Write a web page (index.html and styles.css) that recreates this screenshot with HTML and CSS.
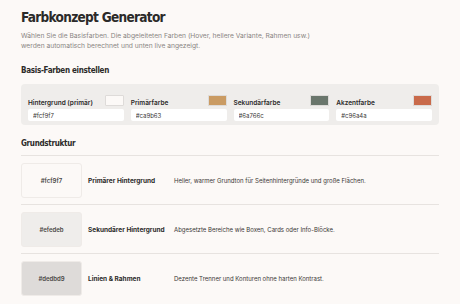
FILE: index.html
```html
<!DOCTYPE HTML>
<html>
	<head>
		<meta name="viewport" content="width=device-width, initial-scale=1">
		<link rel="stylesheet" href="styles.css">
	</head>
	<body>
		<h1 class="title">Farbkonzept Generator</h1>
		<p class="intro">Wählen Sie die Basisfarben. Die abgeleiteten Farben (Hover, hellere Variante, Rahmen usw.) werden automatisch berechnet und unten live angezeigt.</p>

		<h2 class="section-title">Basis-Farben einstellen</h2>
		<div class="base-panel">
			<div class="base-field">
				<div class="base-field-head">
					<span class="base-label">Hintergrund (primär)</span>
					<span class="base-swatch" style="background-color: #fcf9f7;"></span>
				</div>
				<input class="base-input" value="#fcf9f7">
			</div>
			<div class="base-field">
				<div class="base-field-head">
					<span class="base-label">Primärfarbe</span>
					<span class="base-swatch" style="background-color: #ca9b63;"></span>
				</div>
				<input class="base-input" value="#ca9b63">
			</div>
			<div class="base-field">
				<div class="base-field-head">
					<span class="base-label">Sekundärfarbe</span>
					<span class="base-swatch" style="background-color: #6a766c;"></span>
				</div>
				<input class="base-input" value="#6a766c">
			</div>
			<div class="base-field">
				<div class="base-field-head">
					<span class="base-label">Akzentfarbe</span>
					<span class="base-swatch" style="background-color: #c96a4a;"></span>
				</div>
				<input class="base-input" value="#c96a4a">
			</div>
		</div>

		<h2 class="section-title structure-title">Grundstruktur</h2>
		<div class="structure-list">
			<div class="structure-row">
				<div class="structure-swatch" style="background-color: #fcf9f7;">#fcf9f7</div>
				<div class="structure-name">Primärer Hintergrund</div>
				<div class="structure-desc">Heller, warmer Grundton für Seitenhintergründe und große Flächen.</div>
			</div>
			<div class="structure-row">
				<div class="structure-swatch" style="background-color: #efedeb;">#efedeb</div>
				<div class="structure-name">Sekundärer Hintergrund</div>
				<div class="structure-desc">Abgesetzte Bereiche wie Boxen, Cards oder Info-Blöcke.</div>
			</div>
			<div class="structure-row">
				<div class="structure-swatch" style="background-color: #dedbd9;">#dedbd9</div>
				<div class="structure-name">Linien &amp; Rahmen</div>
				<div class="structure-desc">Dezente Trenner und Konturen ohne harten Kontrast.</div>
			</div>
		</div>
	</body>
</html>
```
FILE: styles.css
```css
html{
	font-family: 'Inter', sans-serif;
	color: #2b2a29;
	background-color: #fcf9f7;
}
body{
	margin: 0;
	padding: 10px 21px 0 21px;
}
.title{
	font-family: 'DejaVu Sans Condensed', 'DejaVu Sans', sans-serif;
	font-stretch: condensed;
	font-size: 13.5px;
	font-weight: 700;
	letter-spacing: -0.7px;
	line-height: 15px;
	margin: 0;
}
.intro{
	font-size: 6.7px;
	line-height: 10px;
	color: #8a8683;
	max-width: 305px;
	margin: 6px 0 0 0;
}
.section-title{
	font-family: 'DejaVu Sans Condensed', 'DejaVu Sans', sans-serif;
	font-stretch: condensed;
	font-size: 8px;
	font-weight: 700;
	letter-spacing: -0.3px;
	line-height: 12px;
	margin: 14px 0 7px 0;
}
.base-panel{
	display: grid;
	grid-template-columns: repeat(4, 1fr);
	gap: 7px;
	padding: 9px 7px 4px 7px;
	background-color: #efedeb;
	border-radius: 4px;
}
.base-field-head{
	display: flex;
	justify-content: space-between;
	align-items: center;
	height: 14px;
}
.base-label{
	font-size: 6.5px;
	font-weight: 600;
	padding-top: 5px;
}
.base-swatch{
	width: 17px;
	height: 9px;
	border: 1px solid #dedbd9;
	border-radius: 1px;
}
.base-input{
	display: block;
	box-sizing: border-box;
	width: 100%;
	height: 12px;
	margin-top: 2px;
	border: none;
	border-radius: 2px;
	background-color: #ffffff;
	font-family: 'Inter', sans-serif;
	font-size: 6px;
	color: #3a3836;
	padding: 0 5px;
}
.structure-title{
	margin: 13px 0 5px 0;
}
.structure-list{
	border-top: 1px solid #e7e3e0;
}
.structure-row{
	display: grid;
	grid-template-columns: 61px 80px 1fr;
	column-gap: 6px;
	align-items: center;
	padding: 7px 0 6px 0;
	border-bottom: 1px solid #e7e3e0;
}
.structure-row:last-child{
	border-bottom: none;
}
.structure-swatch{
	height: 35px;
	box-sizing: border-box;
	border: 1px solid #efebe8;
	border-radius: 3px;
	display: flex;
	align-items: center;
	justify-content: center;
	font-size: 6px;
	font-weight: 600;
	color: #4a4745;
}
.structure-name{
	font-size: 6.5px;
	font-weight: 700;
	white-space: nowrap;
}
.structure-desc{
	font-size: 6px;
	color: #3a3836;
}
```
